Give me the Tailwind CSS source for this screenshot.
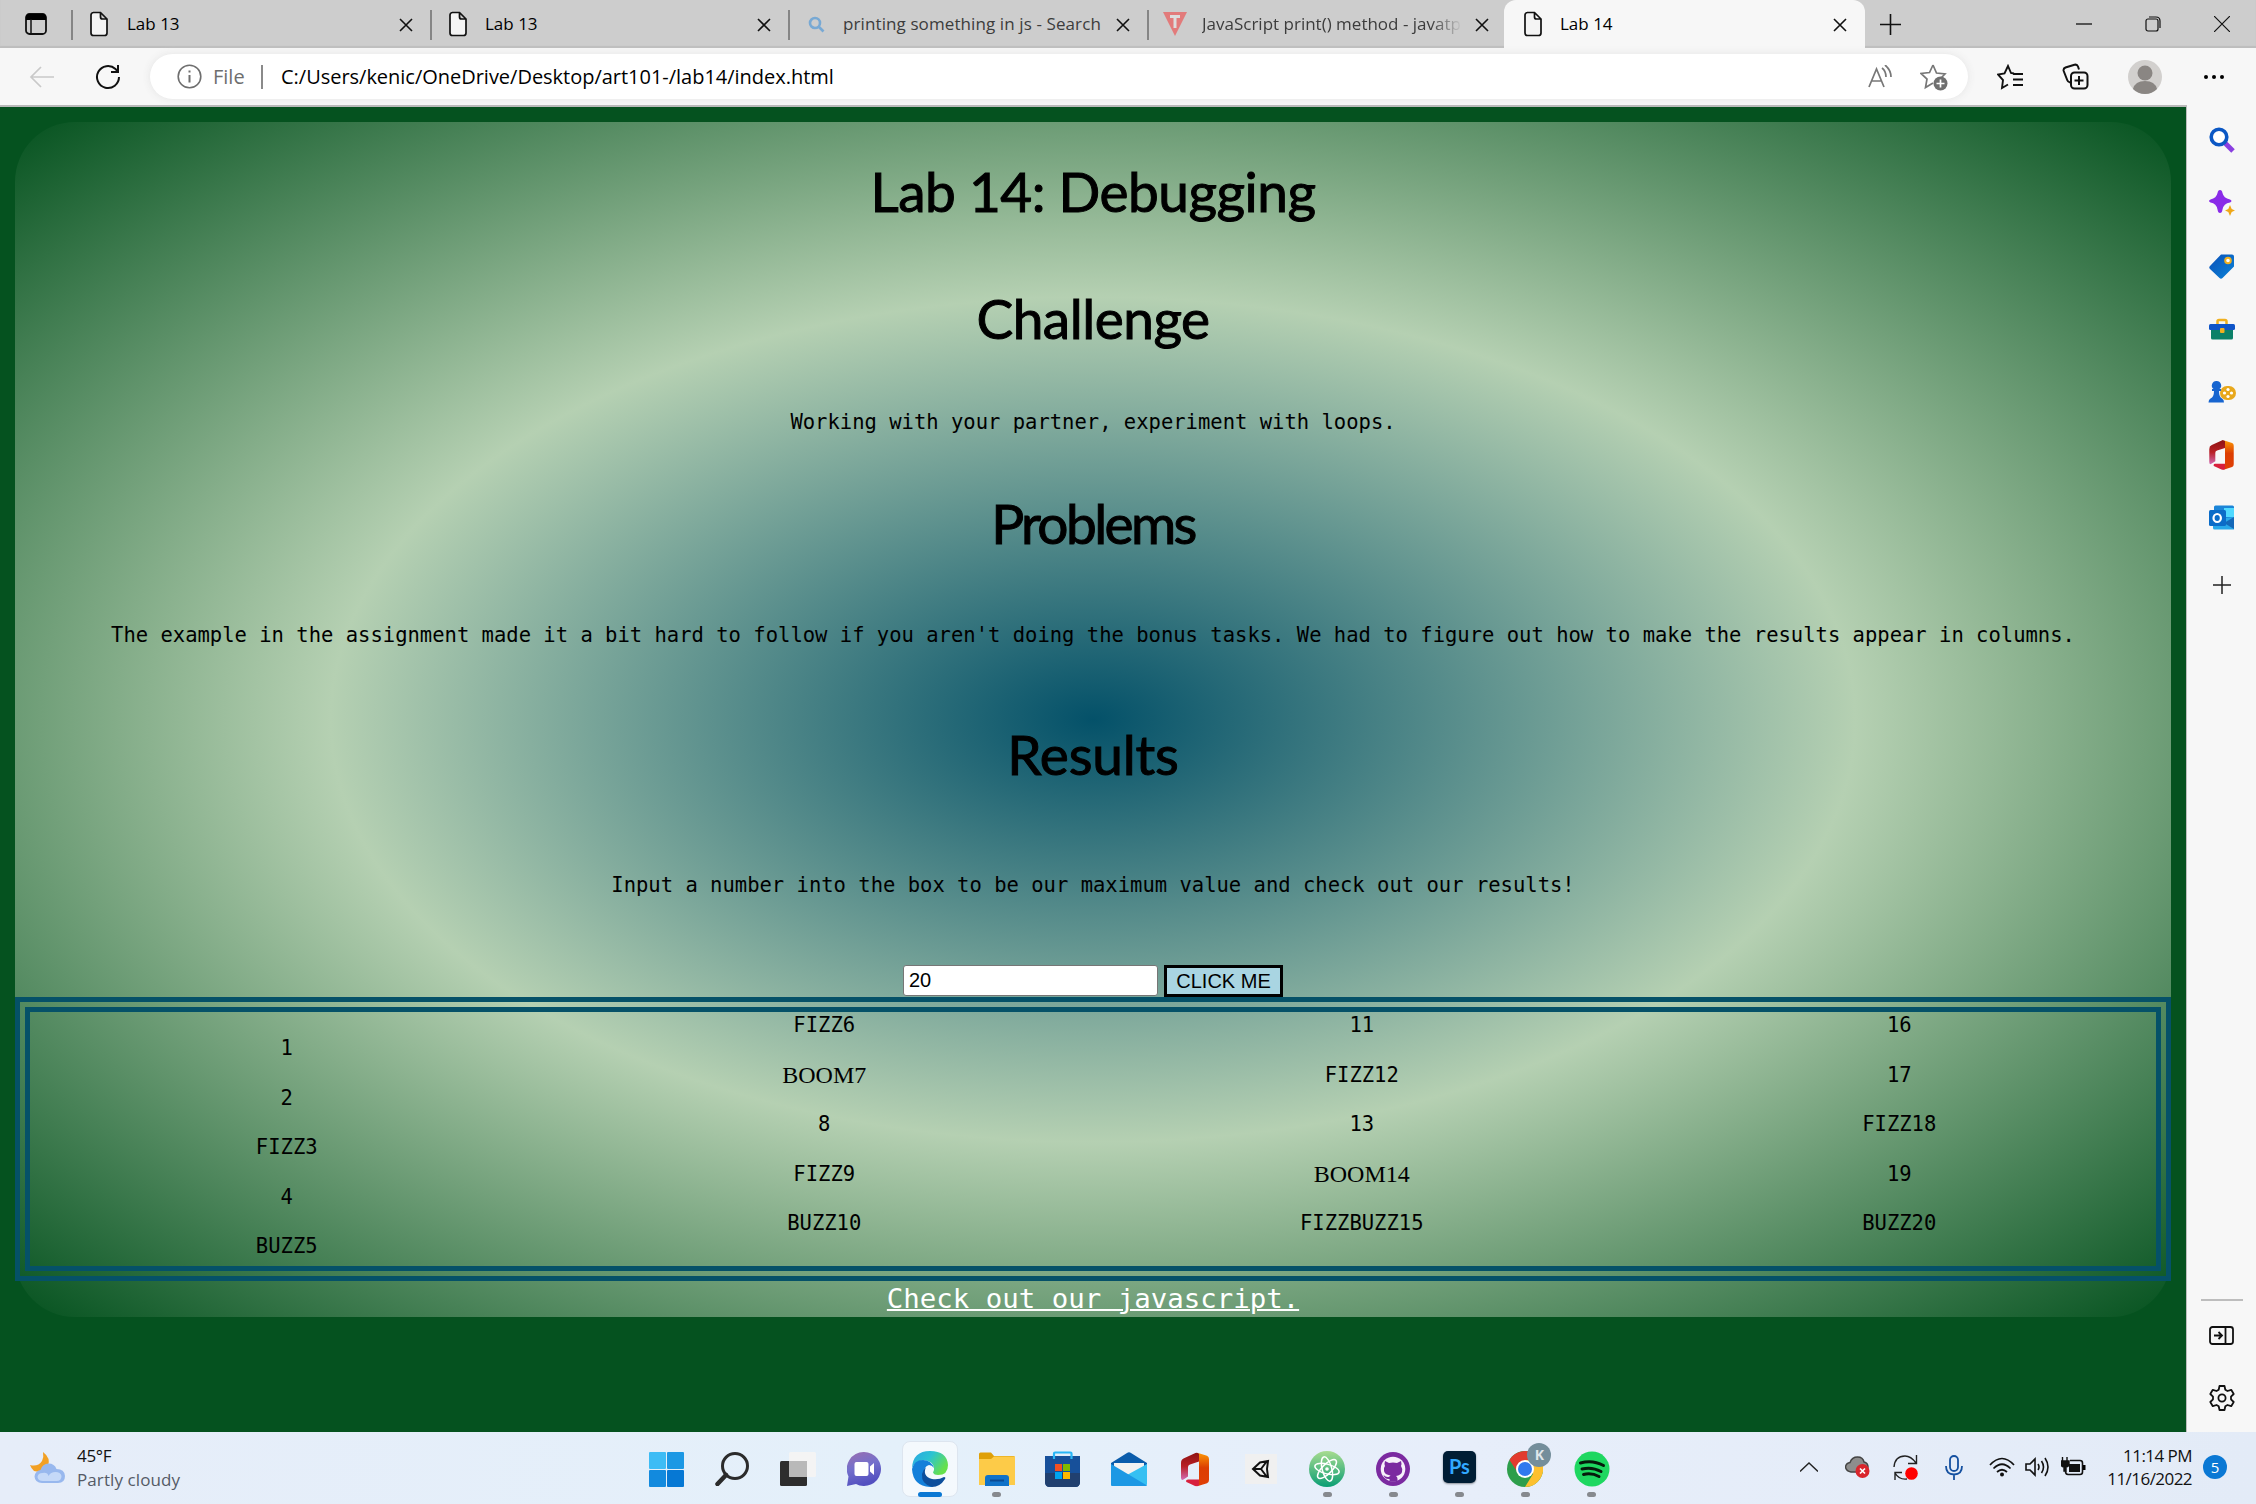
<!DOCTYPE html>
<html lang="en">
<head>
<meta charset="utf-8">
<title>Lab 14</title>
<script src="https://cdn.jsdelivr.net/npm/@tailwindcss/browser@4"></script>
</head>
<body class="w-[2256px] h-[1504px] overflow-hidden flex flex-col bg-[#f7f7f7] text-black font-['Segoe_UI','Open_Sans',sans-serif]">
<svg class="absolute size-0">
  <defs>
    <symbol id="doc" viewBox="0 0 20 26"><path d="M4 1.5h7.5L18 8v14a2.5 2.5 0 0 1-2.5 2.5h-11A2.500 2.500 0 0 1 2 22V4a2.500 2.500 0 0 1 2.500-2.500zM11.500 1.500V6a2 2 0 0 0 2 2H18" fill="#f4f4f4" stroke="#111" stroke-width="1.700"/></symbol>
    <symbol id="x" viewBox="0 0 14 14"><path d="M1 1l12 12M13 1L1 13" stroke="#111" stroke-width="1.600" fill="none"/></symbol>
    <linearGradient id="offA" x1="0" y1="0" x2="0" y2="1"><stop offset="0" stop-color="#8e1212"/><stop offset=".5" stop-color="#b82025"/><stop offset="1" stop-color="#d36bb4"/></linearGradient>
    <linearGradient id="offB" x1="0" y1="0" x2="0" y2="1"><stop offset="0" stop-color="#fd9a06"/><stop offset=".45" stop-color="#dc3e02"/><stop offset="1" stop-color="#e04006"/></linearGradient>
    <symbol id="office" viewBox="0 0 28 34"><path d="M0 10.500Q0 7 3 5.800L15.500 0 18 1v8L9 12q-2 .7-2 2.500V24l-4.500 3Q0 28.500 0 25z" fill="url(#offA)"/><path d="M15.500 0L26 3.300Q28 4 28 6.500v21q0 2.500-2 3.200L15.500 34l2.500-2V1z" fill="url(#offB)"/><path d="M5 28.500Q5 27 7 27h11v5.500q-1.500 2-4 1L6.500 30Q5 29.500 5 28.500z" fill="#d8203c"/></symbol>
    <linearGradient id="blue2" x1="0" y1="0" x2="1" y2="1"><stop offset="0" stop-color="#0c50b8"/><stop offset="1" stop-color="#0a84d8"/></linearGradient>
  </defs>
</svg>

<!-- tab strip -->
<div class="h-12 shrink-0 bg-[#cdcdcd] flex text-[17px] shadow-[inset_0_-2px_1px_#bdbdbd]">
  <div class="w-[71px] flex items-center pl-[25px]">
    <svg width="22" height="22" viewBox="0 0 22 22"><rect x="1" y="1" width="20" height="20" rx="3.500" fill="none" stroke="#111" stroke-width="1.800"/><path d="M1 7V4q0-3 3-3h14q3 0 3 3v3z"/><path d="M6 6v15" stroke="#111" stroke-width="1.500"/></svg>
  </div>
  <div class="w-[359px] flex items-center pl-[18px] pr-[17px] relative"><i class="absolute left-0 top-[10px] w-[2px] h-[30px] bg-[#858585]"></i>
    <svg width="20" height="26"><use href="#doc"/></svg><span class="ml-[18px] grow">Lab 13</span><svg width="14" height="14" class="mt-px"><use href="#x"/></svg></div>
  <div class="w-[358px] flex items-center pl-[18px] pr-[17px] relative"><i class="absolute left-0 top-[10px] w-[2px] h-[30px] bg-[#858585]"></i>
    <svg width="20" height="26"><use href="#doc"/></svg><span class="ml-[17px] grow">Lab 13</span><svg width="14" height="14" class="mt-px"><use href="#x"/></svg></div>
  <div class="w-[359px] flex items-center pl-[20px] pr-[17px] relative"><i class="absolute left-0 top-[10px] w-[2px] h-[30px] bg-[#858585]"></i>
    <svg width="17" height="17" viewBox="0 0 17 17" fill="none" stroke="#78a9d4" stroke-width="2.600"><circle cx="7" cy="7" r="5"/><path d="M10.500 10.500l5 5"/></svg>
    <span class="ml-[18px] grow text-[#3c3c3c] whitespace-nowrap tracking-[.1px]">printing something in js - Search</span><svg width="14" height="14" class="mt-px"><use href="#x"/></svg></div>
  <div class="w-[357px] flex items-center pl-[16px] pr-[15px] relative"><i class="absolute left-0 top-[10px] w-[2px] h-[30px] bg-[#858585]"></i>
    <svg width="24" height="24" viewBox="0 0 24 24"><path d="M0 0h24L12 24z" fill="#e27b7b"/><path d="M7 4.500h10M12 4v12" stroke="#ddd" stroke-width="3"/></svg>
    <span class="ml-[15px] w-[260px] overflow-hidden text-[#3c3c3c] whitespace-nowrap [mask-image:linear-gradient(to_right,#000_88%,transparent)]">JavaScript print() method - javatpoint</span><span class="grow"></span><svg width="14" height="14" class="mt-px"><use href="#x"/></svg></div>
  <div class="w-[361px] flex items-center pl-[19px] pr-[18px] rounded-t-xl bg-[#f7f7f7]">
    <svg width="20" height="26"><use href="#doc"/></svg><span class="ml-[17px] grow">Lab 14</span><svg width="14" height="14" class="mt-px"><use href="#x"/></svg></div>
  <div class="grow flex items-center pl-[15px] pr-[26px]">
    <svg width="21" height="21" viewBox="0 0 21 21" stroke="#111" stroke-width="1.600"><path d="M10.500 0v21M0 10.500h21"/></svg>
    <svg class="ml-auto" width="16" height="16" stroke="#111" stroke-width="1.300"><path d="M0 8h16"/></svg>
    <svg class="ml-[53px]" width="16" height="16" viewBox="0 0 16 16" fill="none" stroke="#111" stroke-width="1.200"><rect x="1" y="3" width="12" height="12" rx="2"/><path d="M4 1h7q4 0 4 4v7"/></svg>
    <svg class="ml-[53px]" width="16" height="16" viewBox="0 0 16 16" stroke="#111" stroke-width="1.200"><path d="M0 0l16 16M16 0L0 16"/></svg>
  </div>
</div>

<!-- address bar -->
<div class="h-[57px] shrink-0 flex items-center pl-[29px] pr-[31px] text-[20px]">
  <svg width="26" height="24" viewBox="0 0 26 24" fill="none" stroke="#c9c9c9" stroke-width="1.700"><path d="M25 12H2M12 2L2 12l10 10"/></svg>
  <svg class="ml-[40px]" width="26" height="26" viewBox="0 0 26 26" fill="none" stroke="#111" stroke-width="2"><path d="M24 13A11 11 0 1 1 20.500 5l2 2.500M23 1v7h-7"/></svg>
  <div class="ml-[29px] w-[1818px] h-[45px] rounded-full bg-white shadow-[0_0_8px_#e4e4e4] flex items-center pl-[27px] pr-[19px]">
    <svg width="25" height="25" viewBox="0 0 25 25" fill="none" stroke="#6e6e6e" stroke-width="1.600"><circle cx="12.500" cy="12.500" r="11.300"/><path d="M12.500 11v7.500M12.500 6.500v2" stroke-width="2"/></svg>
    <span class="ml-[11px] w-[48px] text-[#6e6e6e]">File</span>
    <i class="w-[2px] h-6 bg-[#8a8a8a]"></i>
    <span class="ml-[18px] whitespace-nowrap tracking-[-.02px]">C:/Users/kenic/OneDrive/Desktop/art101-/lab14/index.html</span>
    <svg class="ml-auto" width="25" height="24" viewBox="0 0 25 24" fill="none" stroke="#777" stroke-width="1.700"><path d="M1 22L8.500 4 16 22M3.500 16h10M14 3q4 3 4 9M17 0q6 5 6 12"/></svg>
    <svg class="ml-[27px]" width="29" height="28" viewBox="0 0 29 28"><path d="M13 2l3.500 8 8.500 1-5 5M13 20l-7.500 4.500L7 16 1 10.500l8.500-1L13 2" fill="none" stroke="#777" stroke-width="1.700"/><circle cx="20.500" cy="20.500" r="7" fill="#6f6f6f"/><path d="M20.500 16.500v8M16.500 20.500h8" stroke="#fff" stroke-width="1.700"/></svg>
  </div>
  <svg class="ml-[29px]" width="27" height="26" viewBox="0 0 27 26" fill="none" stroke="#111" stroke-width="1.900"><path d="M17 9.500l-3-.5-3-7-3.500 7.500L1 10.500l5 5.500-1 8 6-3.500M16 10h10M16 15.500h10M16 21h10"/></svg>
  <svg class="ml-[38px]" width="27" height="27" viewBox="0 0 27 27" fill="none" stroke="#111" stroke-width="2"><rect x="9" y="9.500" width="16.500" height="16" rx="3.500"/><path d="M17 13v9M12.500 17.500h9M17 6.500L16 3.500q-1-2.500-3.500-1.700L3.500 4.500Q1 5.500 1.700 8l3.500 9q.6 2 3 2.500"/></svg>
  <svg class="ml-[39px]" width="34" height="34" viewBox="0 0 34 34"><circle cx="17" cy="17" r="17" fill="#d2d0ce"/><circle cx="17" cy="13" r="7.500" fill="#8a8683"/><path d="M5 29q2-8 12-8t12 8q-5 5-12 5T5 29z" fill="#8a8683"/></svg>
  <svg class="ml-auto" width="22" height="6"><circle cx="3" cy="3" r="2"/><circle cx="11" cy="3" r="2"/><circle cx="19" cy="3" r="2"/></svg>
</div>

<div class="h-[1327px] shrink-0 flex">
  <!-- page -->
  <main class="w-[2186px] border-t-2 border-[#b9b9b9] bg-[#05521f] px-[15px] pt-[15px]">
    <div class="h-[1195px] rounded-[60px] bg-[radial-gradient(#045169,#b5d0b2,#05521f)] flex flex-col items-center text-[20.530px] leading-[26px] font-['Consolas','DejaVu_Sans_Mono',monospace]">
      <h1 class="mt-[39px] text-[55px] leading-[60px] font-['Papyrus','Lato',sans-serif] tracking-[-.5px] [-webkit-text-stroke:1px_#000]">Lab 14: Debugging</h1>
      <h2 class="mt-[67px] text-[55px] leading-[60px] font-['Papyrus','Lato',sans-serif] tracking-[-.5px] [-webkit-text-stroke:1px_#000]">Challenge</h2>
      <p class="mt-[61px]">Working with your partner, experiment with loops.</p>
      <h2 class="mt-[58px] text-[55px] leading-[60px] font-['Papyrus','Lato',sans-serif] tracking-[-2.600px] [-webkit-text-stroke:1px_#000]">Problems</h2>
      <p class="mt-[69px] whitespace-nowrap">The example in the assignment made it a bit hard to follow if you aren't doing the bonus tasks. We had to figure out how to make the results appear in columns.</p>
      <h2 class="mt-[76px] text-[55px] leading-[60px] font-['Papyrus','Lato',sans-serif] tracking-[-.2px] [-webkit-text-stroke:1px_#000]">Results</h2>
      <p class="mt-[88px]">Input a number into the box to be our maximum value and check out our results!</p>
      <div class="mt-[67px] h-8 flex gap-1.5 font-['Arial','Liberation_Sans',sans-serif] text-[20px]">
        <input value="20" class="w-[255px] h-[31px] bg-white border border-[#767676] rounded-[3px] px-[5px]">
        <button class="w-[119px] h-8 bg-[#a9d5e2] border-[3px] border-black whitespace-nowrap leading-none">CLICK ME</button>
      </div>
      <div class="w-full h-[284px] shrink-0 border-[15px] border-double border-[#055168] grid grid-cols-4 gap-6 text-center">
        <div class="flex flex-col gap-[23.500px] pt-[23px]"><p>1</p><p>2</p><p>FIZZ3</p><p>4</p><p>BUZZ5</p></div>
        <div class="flex flex-col gap-[23.500px]"><p>FIZZ6</p><p class="font-['Times_New_Roman','Liberation_Serif',serif] text-[24px]">BOOM7</p><p>8</p><p>FIZZ9</p><p>BUZZ10</p></div>
        <div class="flex flex-col gap-[23.500px]"><p>11</p><p>FIZZ12</p><p>13</p><p class="font-['Times_New_Roman','Liberation_Serif',serif] text-[24px]">BOOM14</p><p>FIZZBUZZ15</p></div>
        <div class="flex flex-col gap-[23.500px]"><p>16</p><p>17</p><p>FIZZ18</p><p>19</p><p>BUZZ20</p></div>
      </div>
      <a class="text-white underline decoration-2 text-[27.400px] leading-9">Check out our javascript.</a>
    </div>
  </main>

  <!-- browser sidebar -->
  <aside class="w-[70px] border-l border-[#bdbdbd] flex flex-col items-center pt-[3px]">
    <div class="h-[63px] flex items-center"><svg width="26" height="26" viewBox="0 0 26 26"><path d="M16 16l8 8" stroke="#8a3fe0" stroke-width="5"/><circle cx="10" cy="10" r="7.800" fill="#fff" stroke="#0b57c4" stroke-width="3.600"/></svg></div>
    <div class="h-[63px] flex items-center"><svg width="26" height="26" viewBox="0 0 26 26"><path d="M11 0q2 0 2.500 3 1 5 7.500 6.500 3 1.500 0 3-6.500 1-7.500 7Q13 23 11 23T8.500 19.500q-1-6-7-7-3-1.500 0-3 6-1.500 7-6.500Q9 0 11 0z" fill="#8a2be8"/><path d="M21 15l1.700 4 3.300 1.500-3.300 1.500L21 26l-1.700-4-3.300-1.500 3.300-1.500z" fill="#f0a818"/></svg></div>
    <div class="h-[63px] flex items-center"><svg width="26" height="26" viewBox="0 0 26 26"><path d="M12 1.500h11q2 0 2 2v10L13.500 25q-1.500 1.500-3 0l-9.500-9q-1.500-1.500 0-3z" fill="url(#blue2)"/><circle cx="19" cy="7.500" r="2.800" fill="#fff" stroke="#f0b020" stroke-width="2"/></svg></div>
    <div class="h-[63px] flex items-center"><svg width="26" height="22" viewBox="0 0 26 22"><path d="M8.500 6V3.500Q8.500 2 10 2h6q1.500 0 1.500 1.500V6" fill="none" stroke="#f0b020" stroke-width="2.500"/><path d="M2 11h22v9q0 1.500-1.500 1.500h-19Q2 21.500 2 20z" fill="#0b8068"/><rect x="0" y="6" width="26" height="6" rx="1.500" fill="#1055c8"/><rect x="11" y="10" width="4.500" height="5" rx="1" fill="#f0b020"/></svg></div>
    <div class="h-[63px] flex items-center"><svg width="28" height="24" viewBox="0 0 28 24"><rect x="12" y="6" width="16" height="14" rx="7" fill="#e8a81c"/><g fill="#fff"><circle cx="20" cy="9.500" r="1.600"/><circle cx="20" cy="16.500" r="1.600"/><circle cx="16.500" cy="13" r="1.600"/><circle cx="23.500" cy="13" r="1.600"/></g><path d="M8.500 1a4.500 4.500 0 0 1 3 8h1.500v2h-2q0 6 3 7.500 2 1 2 4H.500q0-3 2-4 3.500-1.500 3.500-7.500H4V9h1.500a4.500 4.500 0 0 1 3-8z" fill="#1765d0"/></svg></div>
    <div class="h-[63px] flex items-center"><svg width="25" height="30" viewBox="0 0 28 34"><use href="#office"/></svg></div>
    <div class="h-[63px] flex items-center"><svg width="25" height="25" viewBox="0 0 25 25"><path d="M5 2q0-1.500 1.500-1.500h17Q25 .500 25 2v12H5z" fill="#1b85d8"/><path d="M15 3h10v9H15z" fill="#50d9ff"/><path d="M4 13h13l8-1v12.500H5.500Q4 24.500 4 23z" fill="#28a8ea"/><path d="M25 12v12L15 18z" fill="#1468b8"/><rect x="0" y="5" width="17" height="16" rx="1.500" fill="#0b6cc8"/><ellipse cx="8.200" cy="13" rx="3.700" ry="4" fill="none" stroke="#fff" stroke-width="2.200"/></svg></div>
    <div class="h-[72px] flex items-center"><svg width="18" height="18" viewBox="0 0 18 18" stroke="#222" stroke-width="1.500"><path d="M9 0v18M0 9h18"/></svg></div>
    <i class="mt-auto w-[42px] h-[2px] bg-[#bdbdbd]"></i>
    <svg class="mt-[25px]" width="25" height="19" viewBox="0 0 25 19" fill="none" stroke="#111" stroke-width="1.800"><rect x="1" y="1" width="23" height="17" rx="2.500"/><path d="M16.500 1v17M5 9.500h8M9.500 6l3.500 3.500L9.500 13"/></svg>
    <svg class="mt-[40px] mb-[21px]" width="26" height="26" viewBox="0 0 26 26" fill="none" stroke="#111" stroke-width="1.800"><path d="M10.500 1h5l.8 3.700 2.200 1.300 3.700-1.200 2.500 4.200L22 11.700v2.600l2.700 2.700-2.500 4.200-3.700-1.200-2.200 1.300-.8 3.700h-5l-.8-3.700-2.200-1.300-3.700 1.200L1.300 17 4 14.300v-2.600L1.300 9l2.500-4.200L7.500 6l2.200-1.300z" stroke-linejoin="round"/><circle cx="13" cy="13" r="3.600"/></svg>
  </aside>
</div>

<!-- taskbar -->
<footer class="h-[72px] shrink-0 bg-[linear-gradient(to_right,#e6edf9,#e4f0fa_40%,#e7eefa_65%,#e3ebf7)] flex items-start text-[17px] text-[#111]">
  <div class="w-[633px] pl-[30px] pt-[12px] flex">
    <svg class="mt-[7px]" width="36" height="34" viewBox="0 0 36 34"><path d="M13 1q8 6 5 14-4 8-14 5-3-3-4-6 8 2 12-4 2-4 1-9z" fill="#f2a024"/><path d="M12 32q-7 0-7.500-6.500Q5 20 10.500 19q2-6.500 8-6.500t8 5.500q8 0 8.500 7 0 7-7 7z" fill="#98b8ee"/><path d="M13 30q-5 0-5.500-4 .5-4 5-4 5-1 6 3 2-4 7-4 5 0 6 4 0 5-5 5z" fill="#c5d9f8"/></svg>
    <div class="ml-[11px] leading-6"><p class="tracking-[-.3px]">45°F</p><p class="text-[#555b66] tracking-[.1px]">Partly cloudy</p></div>
  </div>
  <div class="flex pt-[9px] [&>div]:w-[66.120px] [&>div]:h-14 [&>div]:flex [&>div]:items-center [&>div]:justify-center [&>div]:relative">
    <div><svg width="35" height="35" viewBox="0 0 35 35"><rect width="17" height="17" rx="1" fill="#3dbcf5"/><rect x="18" width="17" height="17" rx="1" fill="#1c98e4"/><rect y="18" width="17" height="17" rx="1" fill="#128ade"/><rect x="18" y="18" width="17" height="17" rx="1" fill="#0678d4"/></svg></div>
    <div><svg width="34" height="34" viewBox="0 0 34 34" fill="none" stroke="#2b2b2b"><circle cx="20" cy="14" r="12.500" stroke-width="3"/><path d="M11 23l-8.500 9" stroke-width="4.500" stroke-linecap="round"/></svg></div>
    <div><svg width="36" height="34" viewBox="0 0 36 34"><rect y="9" width="27" height="25" rx="1.500" fill="#2d2d2d"/><rect x="9" width="27" height="25" rx="1.500" fill="#f4f4f4"/><path d="M9 9h18v16H10.500Q9 25 9 23.500z" fill="#b9b9b9"/></svg></div>
    <div><svg width="34" height="34" viewBox="0 0 34 34"><defs><linearGradient id="chat" x1="0" y1="0" x2=".3" y2="1"><stop offset="0" stop-color="#9a6fb0"/><stop offset=".5" stop-color="#7470cc"/><stop offset="1" stop-color="#5350c0"/></linearGradient></defs><path d="M17 0a17 17 0 1 1-8 32L0 34l1.500-9.500A17 17 0 0 1 17 0z" fill="url(#chat)"/><rect x="7.500" y="10" width="14" height="14" rx="2" fill="#fff"/><path d="M27 11v12l-4-3.500v-5z" fill="#fff"/></svg></div>
    <div><i class="absolute inset-y-0 left-[5px] w-14 rounded-lg bg-white/60 border border-[#dde5ef]"></i>
      <svg class="relative" width="36" height="36" viewBox="0 0 36 36"><defs><linearGradient id="e1" x1="0" x2="1" y1="0" y2=".5"><stop offset="0" stop-color="#2aa6e4"/><stop offset=".5" stop-color="#2cc3d2"/><stop offset="1" stop-color="#66e04c"/></linearGradient></defs><path d="M0 17Q1 0 18 0t18 14q0 10-10 10-4 0-5-2.500 1.500-2 1-4.500Q21 10 12 9 3 10 0 17z" fill="url(#e1)"/><path d="M0 18Q2 9 11 9q8 0 11 8-2-3-5-3-5 1-5 8 1 11 9 13.500-2 .5-3 .5Q1 35 0 18z" fill="#1480da"/><path d="M14 16q-4 9 6 12 7 1 12-2 2 0 1 2-5 8-13 8Q9 33 10 23q1-4 4-7z" fill="#0e4f9c"/></svg>
      <i class="absolute bottom-0 left-[21px] w-6 h-[5px] rounded-full bg-[#0a78d4]"></i></div>
    <div><svg width="36" height="34" viewBox="0 0 36 34"><path d="M0 2q0-1.500 1.500-1.500H12L15 4h19.500Q36 4 36 5.500V12H0z" fill="#dfa008"/><path d="M0 7h12l3-2.500h21V33H0z" fill="#fdcb48"/><path d="M6 34V26q0-3 3-3h18q3 0 3 3v8z" fill="#1072c8"/><path d="M11 28.500h14" stroke="#0a4a92" stroke-width="2"/></svg><i class="absolute bottom-0 w-[9px] h-[5px] rounded-full bg-[#86898e]"></i></div>
    <div><svg width="36" height="36" viewBox="0 0 36 36"><path d="M0 5h35v26q0 5-5 5H5q-5 0-5-5z" fill="#17509a"/><path d="M0 22h35v9q0 5-5 5H5q-5 0-5-5z" fill="#21406f"/><path d="M9 8V2.500q0-1 1-1h15.500q1 0 1 1V8" fill="none" stroke="#29b6f6" stroke-width="2.200"/><path d="M10 13h7v7h-7z" fill="#f25022"/><path d="M18 13h7v7h-7z" fill="#7fba00"/><path d="M10 21h7v7h-7z" fill="#00a4ef"/><path d="M18 21h7v7h-7z" fill="#ffb900"/></svg></div>
    <div><svg width="36" height="34" viewBox="0 0 36 34"><path d="M0 11L16 1q2-1.500 4 0l16 10v3H0z" fill="#0b5cab"/><path d="M3 11h30v12H3z" fill="#f2f2f2"/><path d="M36 12v20q0 2-2 2L16 23z" fill="#36c0f2"/><path d="M0 12l36 21.500-1 .5H1q-1 0-1-1z" fill="#1c98e4"/></svg></div>
    <div><svg width="28" height="35" viewBox="0 0 28 34"><use href="#office"/></svg></div>
    <div><svg width="32" height="30" viewBox="0 0 32 30"><path d="M0 0h32v30H0z" fill="#f0f0f0"/><path d="M8 15l7-6.500 8-1.500-1 8 1 8-8-1.500zM8 15h8M16 15l6-8M16 15l6 8" fill="none" stroke="#111" stroke-width="2"/></svg></div>
    <div><svg width="36" height="36" viewBox="0 0 36 36"><defs><linearGradient id="at" x1="0" y1="0" x2="0" y2="1"><stop offset="0" stop-color="#a8dc90"/><stop offset="1" stop-color="#0a9e74"/></linearGradient></defs><circle cx="18" cy="18" r="18" fill="url(#at)"/><g fill="none" stroke="#fff" stroke-width="1.500"><ellipse cx="18" cy="18" rx="12.500" ry="4.800" transform="rotate(15 18 18)"/><ellipse cx="18" cy="18" rx="12.500" ry="4.800" transform="rotate(75 18 18)"/><ellipse cx="18" cy="18" rx="12.500" ry="4.800" transform="rotate(135 18 18)"/></g><circle cx="18" cy="18" r="1.800" fill="#fff"/></svg><i class="absolute bottom-0 w-[9px] h-[5px] rounded-full bg-[#86898e]"></i></div>
    <div><svg width="34" height="34" viewBox="0 0 34 34"><circle cx="17" cy="17" r="17" fill="#7b2aa0"/><circle cx="17" cy="17" r="12.300" fill="#f6f0fa"/><path d="M9 9l4 2q4-1 8 0l4-2q1 3 0 5 2 3 1 6-1 3-6 4 1.500 1 1.500 3v2.500h-8V27q-5 .5-6-4 3 3 6 1.500l1-1q-6-1-6.500-4.500T9 14q-1-2 0-5z" fill="#7b2aa0"/></svg><i class="absolute bottom-0 w-[9px] h-[5px] rounded-full bg-[#86898e]"></i></div>
    <div><span class="w-[33px] h-8 -mt-1 rounded-[5px] bg-[#001d34] text-[#31a8ff] font-['Lato',sans-serif] font-bold text-[20px] leading-[30px] text-center shadow-[0_1px_2px_#0006]">Ps</span><i class="absolute bottom-0 w-[9px] h-[5px] rounded-full bg-[#86898e]"></i></div>
    <div><svg width="36" height="36" viewBox="0 0 36 36"><circle cx="18" cy="18" r="18" fill="#2d9e4b"/><path d="M2.500 9A18 18 0 0 1 33.600 9H18L11 22z" fill="#e33b2e"/><path d="M18 9h15.600A18 18 0 0 1 18 36l8-13z" fill="#fdc02f"/><circle cx="18" cy="18" r="9" fill="#fff"/><circle cx="18" cy="18" r="7" fill="#3079ee"/></svg><span class="absolute left-[35px] top-[2px] size-[24px] rounded-full bg-[#748e9b] text-[#dfe6ea] text-[14px] font-bold leading-6 text-center">K</span><i class="absolute bottom-0 w-[9px] h-[5px] rounded-full bg-[#86898e]"></i></div>
    <div><svg width="36" height="36" viewBox="0 0 36 36"><circle cx="18" cy="18" r="17.500" fill="#1ed760"/><path d="M6.500 12q12-3.500 23 2.500M8 18q10-2.500 19 2.500M9.500 23.500q8-2 15.500 2" fill="none" stroke="#061a0c" stroke-width="3" stroke-linecap="round"/></svg><i class="absolute bottom-0 w-[9px] h-[5px] rounded-full bg-[#86898e]"></i></div>
  </div>
  <div class="grow h-[70px] flex items-center pl-[175px] pr-[29px]">
    <svg width="18" height="10" viewBox="0 0 18 10" fill="none" stroke="#222" stroke-width="1.400"><path d="M0 9.500L9 1l9 8.500"/></svg>
    <svg class="ml-[27px]" width="25" height="22" viewBox="0 0 25 22"><path d="M6 16q-5-1-5.500-5Q1 7 5 6.500 7 1 12.500 1T19 6q4 1 4 5l-3 5z" fill="#8d8d8d" stroke="#444" stroke-width="1.500"/><circle cx="17.500" cy="15" r="7" fill="#d9252c"/><path d="M15 12.500l5 5M20 12.500l-5 5" stroke="#fff" stroke-width="1.700"/></svg>
    <svg class="ml-[23px]" width="25" height="25" viewBox="0 0 25 25"><path d="M1 12Q2 1 12 1q6 0 11 7M23.500 0v8.500H15M2 25v-7.500h7M2 18q4 7 12 6" fill="none" stroke="#222" stroke-width="1.400"/><circle cx="18.500" cy="18.500" r="6.300" fill="#f00"/></svg>
    <svg class="ml-[27px]" width="18" height="25" viewBox="0 0 18 25" fill="none" stroke="#1450a0" stroke-width="1.800"><rect x="5" y="1" width="8" height="15" rx="4"/><path d="M1 11q0 8.500 8 8.500t8-8.500M9 19.500V25"/></svg>
    <svg class="ml-[26px]" width="26" height="20" viewBox="0 0 26 20" fill="none" stroke="#111" stroke-width="1.700"><path d="M1 8Q13-5 25 8M4.500 11.500q8.500-8.500 17 0M8 15q5-4.500 10 0"/><circle cx="13" cy="17.500" r="2" fill="#111" stroke="none"/></svg>
    <svg class="ml-[10px]" width="25" height="22" viewBox="0 0 25 22" fill="none" stroke="#111" stroke-width="1.600"><path d="M1 8h4l5-5v16l-5-5H1zM13 8q2 3 0 6M16.500 5q4 6 0 12M20 2q6 9 0 18"/></svg>
    <svg class="ml-[11px]" width="25" height="20" viewBox="0 0 25 20"><path d="M1.500 0v4M6 0v4M0 4h8v3q0 2.500-3 3v4h-2v-4Q0 9.500 0 7z" fill="#111" stroke="#111" stroke-width="1.400"/><path d="M9 3.500h10q2.500 0 2.500 2.500v9q0 2.500-2.500 2.500H7Q4.500 17.500 4.500 14" fill="none" stroke="#111" stroke-width="1.600"/><rect x="8" y="7" width="11" height="8" fill="#111"/><path d="M22 8h2.500v5H22z"/></svg>
    <div class="ml-auto text-right leading-[23px] text-[17px] tracking-[-.55px]"><p>11:14 PM</p><p>11/16/2022</p></div>
    <span class="ml-[11px] size-6 rounded-full bg-[#0a78d4] text-white text-[15px] leading-6 text-center">5</span>
  </div>
</footer>
</body>
</html>
